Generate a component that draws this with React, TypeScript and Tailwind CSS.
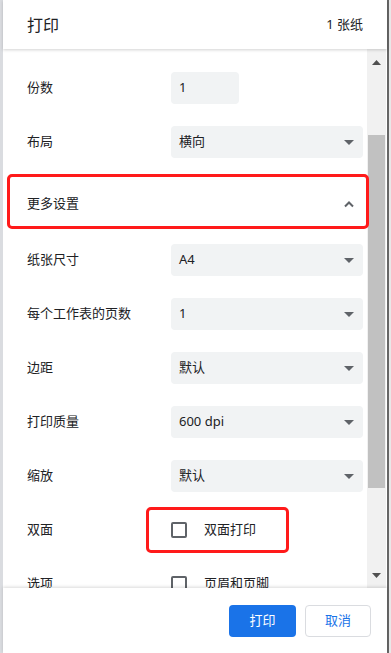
import { ReactNode } from "react";

const Caret = () => (
  <svg width="10" height="5" viewBox="0 0 10 5" className="shrink-0">
    <path d="M0 0 L10 0 L5 5 Z" fill="#5f6368" />
  </svg>
);

type rowProps = {
  label: string,
  children: ReactNode,
};

const Row = ({ label, children }: rowProps) => (
  <div className="flex h-[54px] items-center pl-6 pr-1">
    <div className="w-[144px] shrink-0 text-[13px] text-[#202124]">{label}</div>
    <div className="flex-1">{children}</div>
  </div>
);

const Select = ({ value }: { value: string }) => (
  <div className="flex h-8 items-center justify-between rounded bg-[#f1f3f4] pl-2 pr-[9px] text-[13px] text-[#202124]">
    <span>{value}</span>
    <Caret />
  </div>
);

const Checkbox = ({ label }: { label: string }) => (
  <div className="flex items-center gap-[17px] text-[13px] text-[#202124]">
    <div className="h-4 w-4 rounded-[2px] border-2 border-[#5f6368]" />
    <span>{label}</span>
  </div>
);

const App = () => {
  return (
    <div
      className="flex h-[653px] w-[391px] overflow-hidden bg-white"
      style={{ fontFamily: '"Noto Sans", "Noto Sans CJK SC", sans-serif' }}
    >
      <div className="w-[3px] shrink-0 bg-[#dadce0]" />

      <div className="relative flex w-[384px] shrink-0 flex-col">
        {/* header */}
        <div className="relative z-10 flex h-[49px] shrink-0 items-center justify-between pl-6 pr-6 shadow-[0_1px_3px_rgba(0,0,0,0.18)]">
          <span className="text-[16px] text-[#202124]">打印</span>
          <span className="text-[13px] text-[#202124]">1 张纸</span>
        </div>

        {/* scroll area */}
        <div className="flex h-[539px] shrink-0 overflow-hidden">
          <div className="flex-1 pt-3">
            <Row label="份数">
              <div className="flex h-8 w-[68px] items-center rounded bg-[#f1f3f4] pl-2 text-[13px] text-[#202124]">1</div>
            </Row>
            <Row label="布局">
              <Select value="横向" />
            </Row>
            <div className="flex h-16 items-center justify-between pl-6 pr-[12px] pt-[5px]">
              <span className="text-[13px] text-[#202124]">更多设置</span>
              <svg width="12" height="8" viewBox="0 0 12 8">
                <path d="M2 6.5 L6 2.5 L10 6.5" stroke="#5f6368" strokeWidth="2" fill="none" />
              </svg>
            </div>
            <Row label="纸张尺寸">
              <Select value="A4" />
            </Row>
            <Row label="每个工作表的页数">
              <Select value="1" />
            </Row>
            <Row label="边距">
              <Select value="默认" />
            </Row>
            <Row label="打印质量">
              <Select value="600 dpi" />
            </Row>
            <Row label="缩放">
              <Select value="默认" />
            </Row>
            <Row label="双面">
              <Checkbox label="双面打印" />
            </Row>
            <Row label="选项">
              <Checkbox label="页眉和页脚" />
            </Row>
          </div>

          {/* scrollbar */}
          <div className="flex w-[19px] shrink-0 flex-col bg-[#f1f1f1]">
            <div className="flex h-[22px] items-center justify-center pt-1">
              <svg width="9" height="5" viewBox="0 0 9 5">
                <path d="M0 5 L9 5 L4.5 0 Z" fill="#505050" />
              </svg>
            </div>
            <div className="h-[64px]" />
            <div className="mx-[1px] h-[353px] bg-[#c1c1c1]" />
            <div className="flex-1" />
            <div className="flex h-[22px] items-center justify-center pb-1">
              <svg width="9" height="5" viewBox="0 0 9 5">
                <path d="M0 0 L9 0 L4.5 5 Z" fill="#505050" />
              </svg>
            </div>
          </div>
          <div className="w-[1px] shrink-0" />
        </div>

        {/* footer */}
        <div className="relative z-10 flex flex-1 items-start justify-end gap-[9px] pr-4 pt-[17px] shadow-[0_-1px_3px_rgba(0,0,0,0.15)]">
          <button className="h-8 w-[67px] rounded bg-[#1a73e8] text-[13px] text-white">打印</button>
          <button className="h-8 w-[66px] rounded border border-[#dadce0] bg-white text-[13px] text-[#1a73e8]">取消</button>
        </div>

        {/* highlight boxes */}
        <div className="pointer-events-none absolute left-[4px] top-[174px] h-[55px] w-[362px] rounded-[5px] border-[3px] border-[#ff1a1a]" />
        <div className="pointer-events-none absolute left-[143px] top-[507px] h-[46px] w-[143px] rounded-[5px] border-[3px] border-[#ff1a1a]" />
      </div>

      <div className="w-[2px] shrink-0 bg-[#666]" />
      <div className="flex-1 bg-[#e8e8e8]" />
    </div>
  );
};

export default App;
